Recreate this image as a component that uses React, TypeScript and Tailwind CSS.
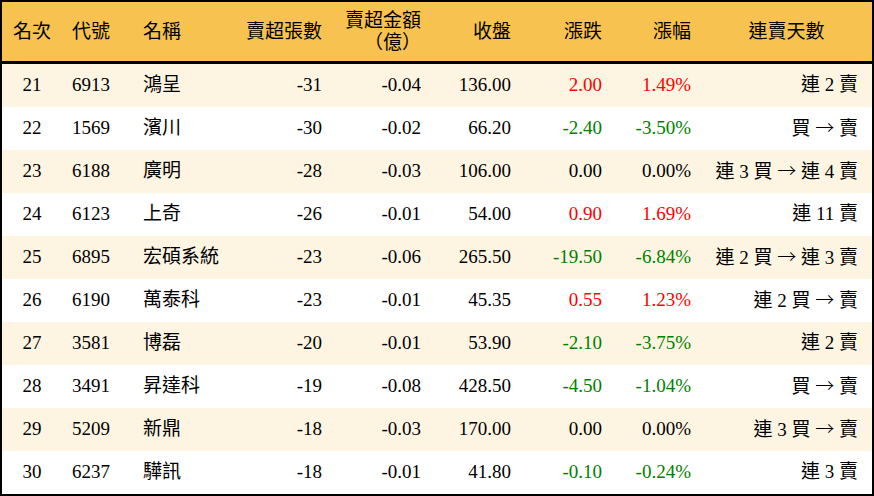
const rows = [
  { rank: 21, code: '6913', name: '鴻呈', qty: '-31', amt: '-0.04', close: '136.00', chg: '2.00', pct: '1.49%', streak: '連 2 賣' },
  { rank: 22, code: '1569', name: '濱川', qty: '-30', amt: '-0.02', close: '66.20', chg: '-2.40', pct: '-3.50%', streak: '買 → 賣' },
  { rank: 23, code: '6188', name: '廣明', qty: '-28', amt: '-0.03', close: '106.00', chg: '0.00', pct: '0.00%', streak: '連 3 買 → 連 4 賣' },
  { rank: 24, code: '6123', name: '上奇', qty: '-26', amt: '-0.01', close: '54.00', chg: '0.90', pct: '1.69%', streak: '連 11 賣' },
  { rank: 25, code: '6895', name: '宏碩系統', qty: '-23', amt: '-0.06', close: '265.50', chg: '-19.50', pct: '-6.84%', streak: '連 2 買 → 連 3 賣' },
  { rank: 26, code: '6190', name: '萬泰科', qty: '-23', amt: '-0.01', close: '45.35', chg: '0.55', pct: '1.23%', streak: '連 2 買 → 賣' },
  { rank: 27, code: '3581', name: '博磊', qty: '-20', amt: '-0.01', close: '53.90', chg: '-2.10', pct: '-3.75%', streak: '連 2 賣' },
  { rank: 28, code: '3491', name: '昇達科', qty: '-19', amt: '-0.08', close: '428.50', chg: '-4.50', pct: '-1.04%', streak: '買 → 賣' },
  { rank: 29, code: '5209', name: '新鼎', qty: '-18', amt: '-0.03', close: '170.00', chg: '0.00', pct: '0.00%', streak: '連 3 買 → 賣' },
  { rank: 30, code: '6237', name: '驊訊', qty: '-18', amt: '-0.01', close: '41.80', chg: '-0.10', pct: '-0.24%', streak: '連 3 賣' },
];

const cols = 'grid grid-cols-[60px_71px_107px_92px_99px_90px_91px_89px_171px]';

const tone = (v: string) => (v.startsWith('-') ? 'text-[#008000]' : v.startsWith('0.00') ? 'text-black' : 'text-[#ff0000]');

// the arrow is drawn full width, as in the CJK font
const Streak = ({ text }: { text: string }) => {
  const parts = text.split('→');
  return (
    <>
      {parts.map((p, i) => (
        <span key={i}>
          {i > 0 && <span className="font-['Noto_Sans_CJK_TC',sans-serif] font-light">→</span>}
          {p}
        </span>
      ))}
    </>
  );
};

export default function App() {
  return (
    <div className="w-[874px] h-[496px] bg-white text-black text-[19px] font-['Liberation_Serif','Noto_Sans_CJK_TC',serif]">
      <div className="border-2 border-black h-full overflow-hidden">
        <div className={`${cols} h-[62px] bg-[#f8c250] border-b-[3px] border-black items-center leading-[22px]`}>
          <div className="text-center">名次</div>
          <div className="pl-[10px]">代號</div>
          <div className="pl-[10px]">名稱</div>
          <div className="text-right pr-[10px]">賣超張數</div>
          <div className="text-right pr-[10px]">
            <div>賣超金額</div>
            <div>（億）</div>
          </div>
          <div className="text-right pr-[10px]">收盤</div>
          <div className="text-right pr-[10px]">漲跌</div>
          <div className="text-right pr-[10px]">漲幅</div>
          <div className="text-center">連賣天數</div>
        </div>
        {rows.map((r, i) => (
          <div key={r.rank} className={`${cols} h-[43px] items-center ${i % 2 === 0 ? 'bg-[#fdf5e2]' : 'bg-white'}`}>
            <div className="text-center">{r.rank}</div>
            <div className="pl-[10px]">{r.code}</div>
            <div className="pl-[10px]">{r.name}</div>
            <div className="text-right pr-[10px]">{r.qty}</div>
            <div className="text-right pr-[10px]">{r.amt}</div>
            <div className="text-right pr-[10px]">{r.close}</div>
            <div className={`text-right pr-[10px] ${tone(r.chg)}`}>{r.chg}</div>
            <div className={`text-right pr-[10px] ${tone(r.pct)}`}>{r.pct}</div>
            <div className="text-right pr-[14px] whitespace-nowrap">
              <Streak text={r.streak} />
            </div>
          </div>
        ))}
      </div>
    </div>
  );
}
